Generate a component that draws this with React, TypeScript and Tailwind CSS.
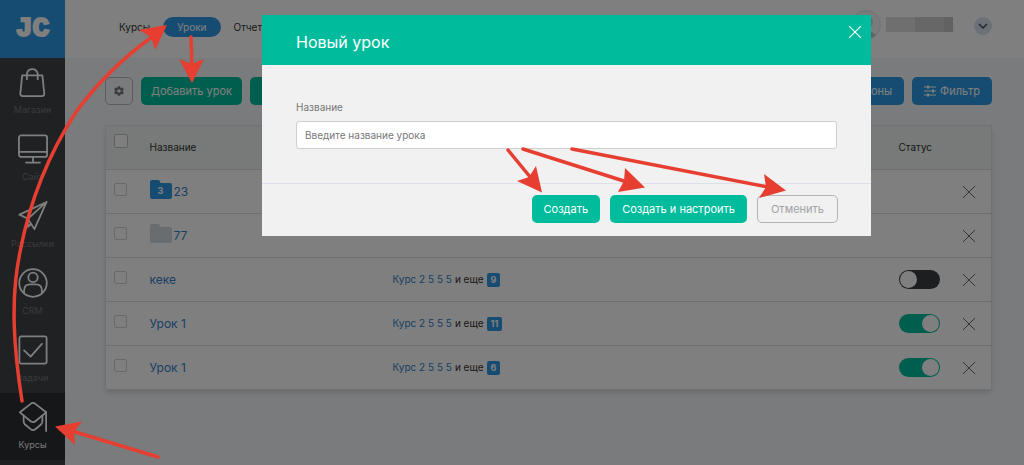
import React from "react";
import { IoMdSettings } from "react-icons/io";

const accent = "#e63e30";

type NavItem = { label: string; active?: boolean; icon: React.ReactNode };

const navItems: NavItem[] = [
  {
    label: "Магазин",
    icon: (
      <>
        <path d="M4.500 9 H26 L28 28 Q28.200 31 25.500 31 H5 Q2.300 31 2.500 28 Z" />
        <path d="M9.500 13 V7 A6 6.500 0 0 1 21 7 V13" />
      </>
    ),
  },
  {
    label: "Сайт",
    icon: (
      <>
        <rect x="1" y="1.500" width="30" height="23" rx="2.500" />
        <path d="M1 19 H31 M16 24.500 V30 M8.500 30.500 H23.500" />
      </>
    ),
  },
  {
    label: "Рассылки",
    icon: <path d="M30.500 1 L1.500 14.500 L10.500 19 L17.500 30 Z M30.500 1 L10.500 19 V27.500 L14 24.500" />,
  },
  {
    label: "CRM",
    icon: (
      <>
        <circle cx="16" cy="16" r="14.700" />
        <circle cx="16" cy="10" r="5" />
        <path d="M6.500 26.500 V24 Q6.500 17.500 13 17.500 H19 Q25.500 17.500 25.500 24 V26.500" />
      </>
    ),
  },
  {
    label: "Задачи",
    icon: (
      <>
        <rect x="1.500" y="1.500" width="29" height="29" rx="2" />
        <path d="M6.500 16.500 L13.500 23 L25.500 9.500" />
      </>
    ),
  },
  {
    label: "Курсы",
    active: true,
    icon: (
      <>
        <path d="M13.500 2 Q16 0 18.500 2 L30 11 L18.500 20.500 Q16 22.500 13.500 20.500 L2 11 Z" />
        <path d="M6 14.500 V20.500 Q6 22.500 7.500 24 L13.500 29 Q16 31 18.500 29 L24.500 24 Q26 22.500 26 20.500 V14.500 M30 11 V31" />
      </>
    ),
  },
];

type Row = { name: string; folder?: "blue" | "gray"; count?: string; more?: string; on?: boolean };

const rows: Row[] = [
  { name: "23", folder: "blue", count: "3" },
  { name: "77", folder: "gray" },
  { name: "кеке", more: "9", on: false },
  { name: "Урок 1", more: "11", on: true },
  { name: "Урок 1", more: "6", on: true },
];

function Sidebar() {
  return (
    <aside className="w-[65px] shrink-0 bg-[#3f4347]">
      <a
        href="#home"
        className="flex h-[58px] items-center justify-center bg-[#2d98e4] font-['Liberation_Mono',monospace] text-[28px] font-bold text-white [-webkit-text-stroke:2px_white]"
      >
        JC
      </a>
      <nav>
        {navItems.map((item) => (
          <a
            key={item.label}
            href="#section"
            className={
              item.active
                ? "flex h-[67px] flex-col items-center bg-[#2c2e31] pt-2 text-[#eeeeee]"
                : "flex h-[67px] flex-col items-center pt-2 text-[#74777a]"
            }
          >
            <svg viewBox="0 0 32 32" className="size-8 p-px text-white" fill="none" stroke="currentColor" strokeWidth="1.900" strokeLinejoin="round" strokeLinecap="round">
              {item.icon}
            </svg>
            <span className="mt-1 text-[9px] leading-4">{item.label}</span>
          </a>
        ))}
      </nav>
    </aside>
  );
}

function Header() {
  return (
    <header className="flex h-[58px] items-start justify-between bg-white pt-[17px] pr-8 pl-[54px]">
      <nav className="flex h-5 items-center text-[10px] text-[#333333]">
        <a href="#courses">Курсы</a>
        <a href="#lessons" className="mr-[13px] ml-[13px] flex h-5 items-center rounded-full bg-[#2d98e4] px-[14px] text-white">
          Уроки
        </a>
        <a href="#reports">Отчеты</a>
      </nav>
      <div className="flex items-start">
        <svg viewBox="0 0 32 32" className="-mt-2 mr-1 size-8">
          <circle cx="16" cy="16" r="14" fill="#f5f6f8" stroke="#e9edf2" strokeWidth="2" />
          <circle cx="16" cy="13" r="7" fill="#d3d5d9" />
          <path d="M6 26 Q16 17 26 26 Q16 34 6 26 Z" fill="#c3c6ca" />
        </svg>
        <div className="mr-[21px] flex h-[15px] w-[67px]">
          <span className="flex-[29] bg-[#dcdedd]" />
          <span className="flex-[29] bg-[#cfcfcf]" />
          <span className="flex-[9] bg-[#c4c4c4]" />
        </div>
        <button aria-label="Меню профиля" className="flex size-[18px] items-center justify-center rounded-full bg-[#d8e3ee]">
          <svg viewBox="0 0 10 10" className="size-[10px]" fill="none" stroke="#3f4a56" strokeWidth="1.500">
            <path d="M1 3 L5 7 L9 3" />
          </svg>
        </button>
      </div>
    </header>
  );
}

function Toolbar() {
  return (
    <div className="flex h-7 justify-between text-[11px] text-white">
      <div className="flex">
        <button aria-label="Настройки" className="mr-2 flex w-7 items-center justify-center rounded-[5px] border border-[#b4b7bb] text-[#777a7e]">
          <IoMdSettings size={12} />
        </button>
        <button className="mr-2 rounded-[5px] bg-[#00bc9c] px-[10px]">Добавить урок</button>
        <button className="rounded-[5px] bg-[#00bc9c] px-3">Создать папку</button>
      </div>
      <div className="flex gap-2">
        <button className="rounded-[5px] bg-[#2d98e4] px-3">Шаблоны</button>
        <button className="flex items-center gap-1 rounded-[5px] bg-[#2d98e4] px-3">
          <svg viewBox="0 0 12 12" className="size-3" fill="none" stroke="currentColor" strokeWidth="1.200">
            <path d="M0 2 H12 M0 6 H12 M0 10 H12" />
            <path d="M4 .5 V3.500 M9 4.500 V7.500 M4 8.500 V11.500" strokeWidth="2" />
          </svg>
          Фильтр
        </button>
      </div>
    </div>
  );
}

function LessonTable() {
  return (
    <table className="w-full table-fixed border-collapse border border-[#dfe4ea] bg-white text-left text-[#333333] shadow-md">
      <thead>
        <tr className="h-11 bg-[#eff4f1] text-[10px]">
          <th className="w-11 pt-2 pl-2 align-top font-normal">
            <input type="checkbox" aria-label="Выбрать все" className="block size-[14px] appearance-none rounded-[2px] border border-[#bcc3ca] bg-white" />
          </th>
          <th className="w-[243px] font-normal">Название</th>
          <th className="font-normal">Курсы</th>
          <th className="w-[49px] font-normal">Статус</th>
          <th className="w-11" />
        </tr>
      </thead>
      <tbody>
        {rows.map((row, i) => (
          <tr key={i} className="h-11 border-t border-[#dcdfe3]">
            <td className="pt-[13px] pl-2 align-top">
              <input type="checkbox" aria-label={row.name} className="block size-[13px] appearance-none rounded-[2px] border border-[#cfd3d7] bg-white" />
            </td>
            <td>
              <a href="#lesson" className="flex items-center gap-[2px] text-[12px] leading-4 text-[#2f7ecb]">
                {row.folder && (
                  <span className="relative -mt-1 h-[19px] w-[22px]">
                    <svg viewBox="0 0 22 19" className={row.folder === "blue" ? "size-full text-[#2d98e4]" : "size-full text-[#d3dade]"} fill="currentColor">
                      <path d="M2 0 H8 Q9.500 0 10 1.500 L10.500 3 H20 Q22 3 22 5 V17 Q22 19 20 19 H2 Q0 19 0 17 V2 Q0 0 2 0 Z" />
                    </svg>
                    <span className="absolute inset-x-0 top-[5px] text-center text-[9px] leading-3 font-bold text-white">{row.count}</span>
                  </span>
                )}
                {row.name}
              </a>
            </td>
            <td className="text-[10px]">
              {row.more && (
                <div className="flex items-center gap-[3px]">
                  <a href="#course" className="text-[#2f7ecb]">Курс 2 5 5 5</a>
                  <span>и еще</span>
                  <span className="flex h-[14px] items-center rounded-[2px] bg-[#2d98e4] px-1 text-[9px] font-bold text-white">{row.more}</span>
                </div>
              )}
            </td>
            <td>
              {row.more && (
                <input
                  type="checkbox"
                  role="switch"
                  aria-label="Статус"
                  defaultChecked={row.on}
                  className="block h-[19px] w-[41px] appearance-none rounded-full bg-[#3a3d41] p-px before:block before:size-[17px] before:rounded-full before:bg-white checked:bg-[#00bc9c] checked:before:ml-auto"
                />
              )}
            </td>
            <td>
              <button aria-label="Удалить" className="mx-auto block">
                <svg viewBox="0 0 12 12" className="size-3" fill="none" stroke="#6a6a6a" strokeWidth="1">
                  <path d="M0 0 L12 12 M12 0 L0 12" />
                </svg>
              </button>
            </td>
          </tr>
        ))}
      </tbody>
    </table>
  );
}

function NewLessonDialog() {
  return (
    <div className="absolute inset-0 z-10 bg-black/50 pt-[15px]">
      <form role="dialog" aria-labelledby="dialog-title" className="ml-[262px] w-[609px] bg-[#f1f1f1]" onSubmit={(e) => e.preventDefault()}>
        <div className="flex h-[50px] items-start justify-between bg-[#00bc9c] pt-[11px] pr-[10px] pl-[34px] text-white">
          <h2 id="dialog-title" className="pt-[2px] text-[16px] leading-7">Новый урок</h2>
          <button type="button" aria-label="Закрыть">
            <svg viewBox="0 0 12 12" className="size-3" fill="none" stroke="currentColor" strokeWidth="1.100">
              <path d="M0 0 L12 12 M12 0 L0 12" />
            </svg>
          </button>
        </div>
        <div className="border-b border-[#dce0e8] px-[34px] pt-[34px] pb-[34px]">
          <label htmlFor="lesson-name" className="block text-[10px] leading-4 text-[#777777]">Название</label>
          <input
            id="lesson-name"
            placeholder="Введите название урока"
            className="mt-[6px] block h-7 w-full rounded-[3px] border border-[#cfcfcf] bg-white px-2 text-[10px] placeholder:text-[#777777]"
          />
        </div>
        <div className="flex h-[52px] items-start justify-end gap-[10px] pt-[11px] pr-[33px] text-[11px]">
          <button className="h-7 rounded-[5px] bg-[#00bc9c] px-3 text-white">Создать</button>
          <button className="h-7 rounded-[5px] bg-[#00bc9c] px-3 text-white">Создать и настроить</button>
          <button type="button" className="h-7 rounded-[5px] border border-[#b4b4b8] px-[13px] text-[#a2a2a6]">Отменить</button>
        </div>
      </form>
    </div>
  );
}

function Arrows() {
  return (
    <svg viewBox="0 0 1024 465" className="pointer-events-none absolute top-0 left-0 z-20 h-[465px] w-[1024px]" fill="none" stroke={accent} strokeWidth="3.500" strokeLinecap="round">
      <path d="M22 401 C14 350 10 300 20 252 C30 200 48 155 76 112 C95 86 120 60 152 37" />
      <path d="M191 37 L192 66" />
      <path d="M158 457 L72 431" />
      <path d="M508 150 L531 178" />
      <path d="M523 149 L627 182" />
      <path d="M572 149 L768 187" />
      <g fill={accent} stroke="none">
        <path d="M167 25 L139 30 L151 37 L155 50 Z" />
        <path d="M192 83 L179 59 L192 64 L204 59 Z" />
        <path d="M55 426.500 L82 421.500 L74 432 L75 445 Z" />
        <path d="M542 192.500 L536 166 L529 177 L517 181 Z" />
        <path d="M645 187.500 L625 168 L624 181 L618 192 Z" />
        <path d="M786 190.500 L764 174 L766 187 L759 198 Z" />
      </g>
    </svg>
  );
}

export default function App() {
  return (
    <div className="relative flex min-h-screen overflow-hidden bg-[#f3f6fa] font-[Inter,sans-serif]">
      <Sidebar />
      <div className="min-w-0 flex-1">
        <Header />
        <main className="pt-[19px] pr-8 pl-10">
          <Toolbar />
          <div className="mt-5">
            <LessonTable />
          </div>
        </main>
      </div>
      <NewLessonDialog />
      <Arrows />
    </div>
  );
}
